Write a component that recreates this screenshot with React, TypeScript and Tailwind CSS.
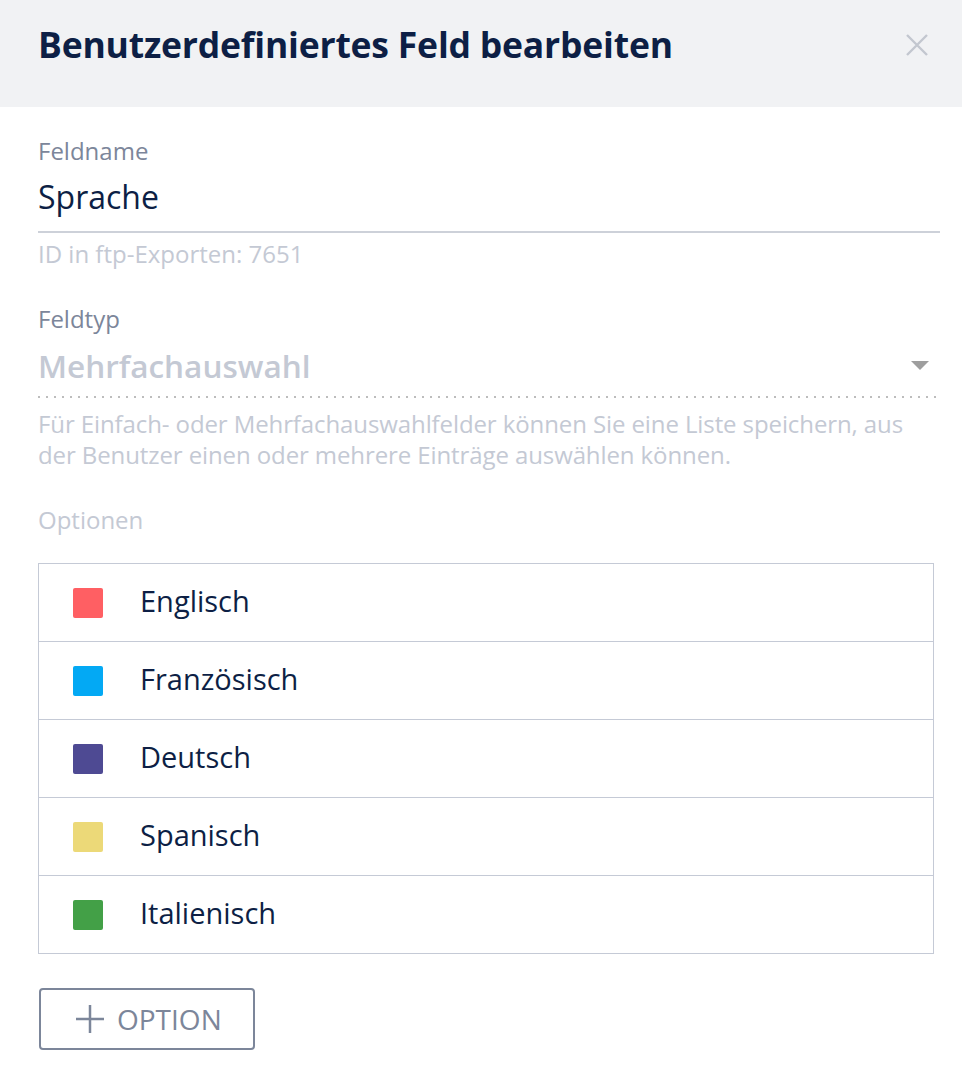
import React from "react";

interface Option {
  label: string;
  color: string;
}

const options: Option[] = [
  { label: "Englisch", color: "bg-[#ff5f63]" },
  { label: "Französisch", color: "bg-[#03a9f4]" },
  { label: "Deutsch", color: "bg-[#4e4a93]" },
  { label: "Spanisch", color: "bg-[#ecd978]" },
  { label: "Italienisch", color: "bg-[#43a047]" },
];

const App: React.FC = () => {
  return (
    <div className="w-[962px] min-h-[1086px] bg-white font-['Open_Sans',sans-serif]">
      {/* header */}
      <div className="h-[107px] bg-[#f1f2f4] flex items-start justify-between pl-[38px] pr-[34px] pt-[22px]">
        <h1 className="text-[35.5px] leading-[44px] font-bold text-[#0d1f45] tracking-[-0.2px]">
          Benutzerdefiniertes Feld bearbeiten
        </h1>
        <button className="mt-[12px] text-[#c3c7cf]">
          <svg width="22" height="22" viewBox="0 0 22 22">
            <path d="M1 1 L21 21 M21 1 L1 21" stroke="currentColor" strokeWidth="2.4" />
          </svg>
        </button>
      </div>

      <div className="pl-[38px] pr-[22px]">
        {/* Feldname */}
        <div className="pt-[29px] text-[24px] leading-[30px] text-[#7c869a]">Feldname</div>
        <div className="mt-[11px] text-[32px] leading-[40px] pb-[14px] text-[#0d1f45] border-b-2 border-[#cdd1d9]">
          Sprache
        </div>
        <div className="mt-[7px] text-[24px] leading-[28px] text-[#c4c9d4]">ID in ftp-Exporten: 7651</div>

        {/* Feldtyp */}
        <div className="mt-[36px] text-[24px] leading-[30px] text-[#7c869a]">Feldtyp</div>
        <div className="mt-[12px] pb-[10px] flex items-center justify-between">
          <span className="text-[31.5px] leading-[40px] font-semibold text-[#c4c9d4]">Mehrfachauswahl</span>
          <svg width="20" height="10" viewBox="0 0 20 10" className="mr-[10px]">
            <path d="M1 0 H19 L10 9 Z" fill="#9e9e9e" />
          </svg>
        </div>
        <div className="h-[2px] bg-[linear-gradient(to_right,#bdbdbd_2px,transparent_2px)] bg-[length:8px_2px] bg-repeat-x" />
        <p className="mt-[10px] text-[24px] leading-[31px] text-[#c4c9d4] tracking-[-0.1px]">
          Für Einfach- oder Mehrfachauswahlfelder können Sie eine Liste speichern, aus
          <br />
          der Benutzer einen oder mehrere Einträge auswählen können.
        </p>

        {/* Optionen */}
        <div className="mt-[35px] text-[24px] leading-[30px] text-[#c4c9d4]">Optionen</div>
        <div className="mt-[28px] mr-[6px] border-b border-[#c5cad6]">
          {options.map((o) => (
            <div
              key={o.label}
              className="h-[78px] flex items-center border-t border-x border-[#c5cad6] pl-[34px]"
            >
              <span className={`w-[30px] h-[30px] rounded-[2px] ${o.color}`} />
              <span className="ml-[37px] text-[29px] leading-[36px] -mt-[4px] text-[#0d1f45]">{o.label}</span>
            </div>
          ))}
        </div>

        <button className="mt-[34px] ml-[1px] w-[216px] h-[62px] flex items-center pl-[34px] gap-[12px] border-2 border-[#7c869a] rounded-[4px] text-[#7c869a]">
          <svg width="30" height="30" viewBox="0 0 30 30">
            <path d="M15 1 V29 M1 15 H29" stroke="currentColor" strokeWidth="2.5" />
          </svg>
          <span className="text-[28px] leading-[34px] font-medium">OPTION</span>
        </button>
      </div>
    </div>
  );
};

export default App;
